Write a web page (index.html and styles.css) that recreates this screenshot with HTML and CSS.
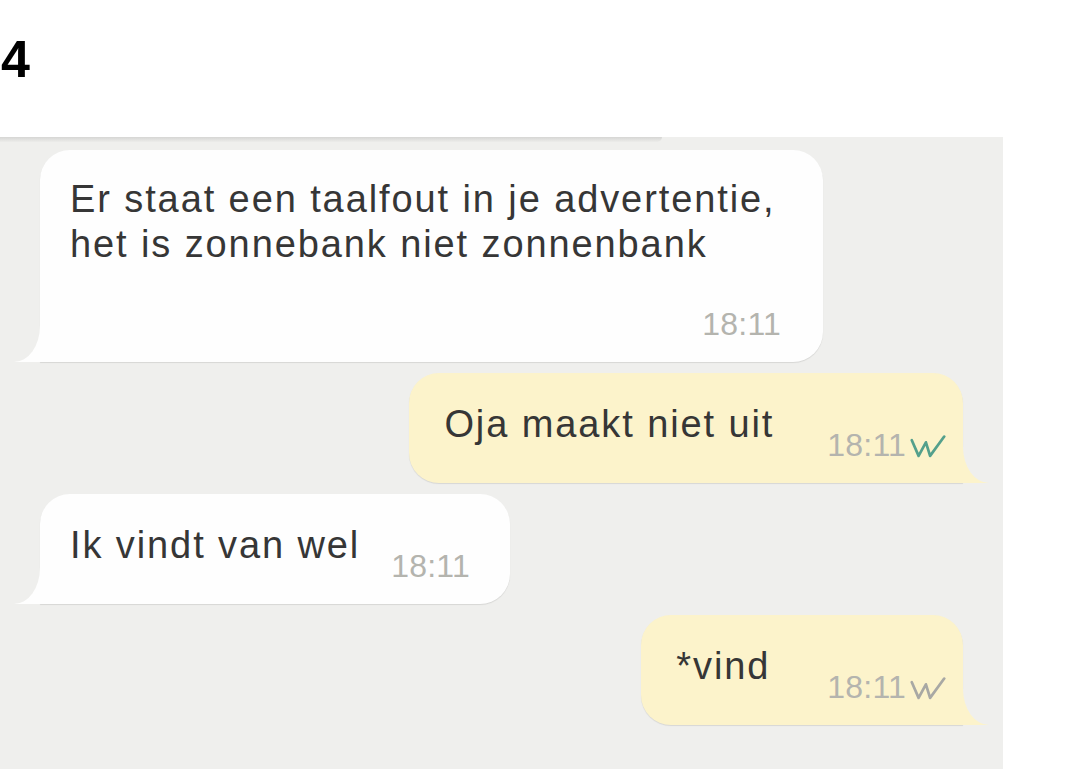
FILE: index.html
```html
<!DOCTYPE html>
<html lang="nl">
<head>
<meta charset="utf-8">
<title>4</title>
<link rel="stylesheet" href="styles.css">
</head>
<body>
<h1 class="num">4</h1>
<section class="chat">
  <div class="prev"></div>
  <div class="messages">
    <div class="bubble in multi">
      <p class="text">Er staat een taalfout in je advertentie,<br>het is zonnebank niet zonnenbank</p>
      <span class="time">18:11</span>
    </div>
    <div class="bubble out single">
      <p class="text">Oja maakt niet uit</p>
      <span class="meta"><span class="time">18:11</span><svg class="check read" viewBox="0 0 34 22" width="36" height="23"><polyline points="1.5,5 8,20 15,7 19,20 32.5,1.5" fill="none" stroke-width="2.6" stroke-linejoin="round" stroke-linecap="round"/></svg></span>
    </div>
    <div class="bubble in single">
      <p class="text">Ik vindt van wel</p>
      <span class="time">18:11</span>
    </div>
    <div class="bubble out single narrow">
      <p class="text">*vind</p>
      <span class="meta"><span class="time">18:11</span><svg class="check sent" viewBox="0 0 34 22" width="36" height="23"><polyline points="1.5,5 8,20 15,7 19,20 32.5,1.5" fill="none" stroke-width="2.6" stroke-linejoin="round" stroke-linecap="round"/></svg></span>
    </div>
  </div>
</section>
</body>
</html>
```
FILE: styles.css
```css
html, body {
  margin: 0;
  padding: 0;
  background: #ffffff;
}

body {
  font-family: "Liberation Sans", Arial, sans-serif;
  width: 1079px;
}

.num {
  margin: 29px 0 48px 1px;
  font-size: 52px;
  line-height: 60px;
  font-weight: 700;
  color: #000;
}

.chat {
  width: 1003px;
  height: 632px;
  background: #efefed;
  overflow: hidden;
}

.prev {
  width: 662px;
  height: 5px;
  background: linear-gradient(#d6d6d4, #ececea);
  border-bottom-right-radius: 6px;
}

.messages {
  display: flex;
  flex-direction: column;
  gap: 11px;
  padding: 8px 40px 0;
}

.bubble {
  position: relative;
  box-sizing: border-box;
  border-radius: 30px;
  box-shadow: 0 1px 1px rgba(0, 0, 0, 0.10);
}

.bubble .text {
  margin: 0;
  font-size: 38px;
  line-height: 45px;
  letter-spacing: 1.9px;
  color: #363636;
  white-space: nowrap;
}

.time {
  font-size: 32px;
  line-height: 36px;
  color: #b4b4ae;
  letter-spacing: 0.2px;
}

.in {
  align-self: flex-start;
  background: #fefefe;
  border-bottom-left-radius: 0;
}

.out {
  align-self: flex-end;
  background: #fcf3cb;
  border-bottom-right-radius: 0;
}

.in::before,
.in::after,
.out::before,
.out::after {
  content: "";
  position: absolute;
  bottom: 0;
  width: 26px;
  height: 36px;
}

.in::before {
  left: -26px;
  background: #fefefe;
}

.in::after {
  left: -26px;
  background: #efefed;
  border-bottom-right-radius: 26px 36px;
}

.out::before {
  right: -26px;
  background: #fcf3cb;
}

.out::after {
  right: -26px;
  background: #efefed;
  border-bottom-left-radius: 26px 36px;
}

.multi {
  width: 783px;
  height: 212px;
  padding: 27px 42px 20px 30px;
  display: flex;
  flex-direction: column;
}

.multi .time {
  align-self: flex-end;
  margin-top: 39px;
}

.single {
  height: 110px;
  padding: 29px 0 20px 30px;
  display: flex;
  align-items: flex-end;
}

.single .text {
  margin-bottom: 16px;
}

.in.single {
  padding-right: 40px;
  gap: 31px;
}

.out.single {
  padding-left: 35px;
  padding-right: 17px;
  gap: 53px;
}

.out.narrow {
  gap: 57px;
}

.meta {
  display: flex;
  align-items: flex-end;
  gap: 4px;
}

.check {
  display: block;
  margin-bottom: 5px;
}

.check.read polyline {
  stroke: #54a08c;
}

.check.sent polyline {
  stroke: #a8a8a4;
}
```
